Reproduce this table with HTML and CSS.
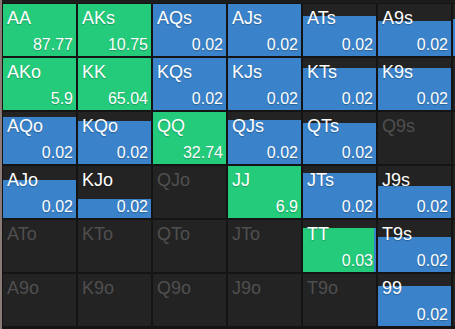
FILE: index.html
```html
<!DOCTYPE html>
<html lang="en">
<head>
<meta charset="utf-8">
<title>Range grid</title>
<link rel="stylesheet" href="styles.css">
</head>
<body>
<div class="frame">
  <div class="edge"></div>
  <div class="main">
    <div class="topbar"></div>
    <div class="board">
      <!-- row A -->
      <div class="cell"><div class="bar" style="height:100%"><span class="seg g"></span></div><div class="content"><span class="lbl">AA</span><span class="val">87.77</span></div></div>
      <div class="cell"><div class="bar" style="height:100%"><span class="seg g"></span></div><div class="content"><span class="lbl">AKs</span><span class="val">10.75</span></div></div>
      <div class="cell"><div class="bar" style="height:100%"><span class="seg b"></span></div><div class="content"><span class="lbl">AQs</span><span class="val">0.02</span></div></div>
      <div class="cell"><div class="bar" style="height:100%"><span class="seg b"></span></div><div class="content"><span class="lbl">AJs</span><span class="val">0.02</span></div></div>
      <div class="cell"><div class="bar" style="height:77%"><span class="seg b"></span></div><div class="content"><span class="lbl">ATs</span><span class="val">0.02</span></div></div>
      <div class="cell"><div class="bar" style="height:67%"><span class="seg b"></span></div><div class="content"><span class="lbl">A9s</span><span class="val">0.02</span></div></div>
      <div class="cell"><div class="bar" style="height:71%"><span class="seg b"></span></div></div>
      <!-- row K -->
      <div class="cell"><div class="bar" style="height:100%"><span class="seg g"></span></div><div class="content"><span class="lbl">AKo</span><span class="val">5.9</span></div></div>
      <div class="cell"><div class="bar" style="height:100%"><span class="seg g"></span></div><div class="content"><span class="lbl">KK</span><span class="val">65.04</span></div></div>
      <div class="cell"><div class="bar" style="height:100%"><span class="seg b"></span></div><div class="content"><span class="lbl">KQs</span><span class="val">0.02</span></div></div>
      <div class="cell"><div class="bar" style="height:100%"><span class="seg b"></span></div><div class="content"><span class="lbl">KJs</span><span class="val">0.02</span></div></div>
      <div class="cell"><div class="bar" style="height:81%"><span class="seg b"></span></div><div class="content"><span class="lbl">KTs</span><span class="val">0.02</span></div></div>
      <div class="cell"><div class="bar" style="height:81%"><span class="seg b"></span></div><div class="content"><span class="lbl">K9s</span><span class="val">0.02</span></div></div>
      <div class="cell empty"></div>
      <!-- row Q -->
      <div class="cell"><div class="bar" style="height:91%"><span class="seg b"></span></div><div class="content"><span class="lbl">AQo</span><span class="val">0.02</span></div></div>
      <div class="cell"><div class="bar" style="height:83%"><span class="seg b"></span></div><div class="content"><span class="lbl">KQo</span><span class="val">0.02</span></div></div>
      <div class="cell"><div class="bar" style="height:100%"><span class="seg g"></span></div><div class="content"><span class="lbl">QQ</span><span class="val">32.74</span></div></div>
      <div class="cell"><div class="bar" style="height:85%"><span class="seg b"></span></div><div class="content"><span class="lbl">QJs</span><span class="val">0.02</span></div></div>
      <div class="cell"><div class="bar" style="height:79%"><span class="seg b"></span></div><div class="content"><span class="lbl">QTs</span><span class="val">0.02</span></div></div>
      <div class="cell empty"><div class="content"><span class="lbl">Q9s</span></div></div>
      <div class="cell empty"></div>
      <!-- row J -->
      <div class="cell"><div class="bar" style="height:74%"><span class="seg b"></span></div><div class="content"><span class="lbl">AJo</span><span class="val">0.02</span></div></div>
      <div class="cell"><div class="bar" style="height:36%"><span class="seg b"></span></div><div class="content"><span class="lbl">KJo</span><span class="val">0.02</span></div></div>
      <div class="cell empty"><div class="content"><span class="lbl">QJo</span></div></div>
      <div class="cell"><div class="bar" style="height:100%"><span class="seg g"></span></div><div class="content"><span class="lbl">JJ</span><span class="val">6.9</span></div></div>
      <div class="cell"><div class="bar" style="height:87%"><span class="seg b"></span></div><div class="content"><span class="lbl">JTs</span><span class="val">0.02</span></div></div>
      <div class="cell"><div class="bar" style="height:62%"><span class="seg b"></span></div><div class="content"><span class="lbl">J9s</span><span class="val">0.02</span></div></div>
      <div class="cell empty"></div>
      <!-- row T -->
      <div class="cell empty"><div class="content"><span class="lbl">ATo</span></div></div>
      <div class="cell empty"><div class="content"><span class="lbl">KTo</span></div></div>
      <div class="cell empty"><div class="content"><span class="lbl">QTo</span></div></div>
      <div class="cell empty"><div class="content"><span class="lbl">JTo</span></div></div>
      <div class="cell"><div class="bar" style="height:85%"><span class="seg g" style="flex-grow:97"></span><span class="seg b" style="flex-grow:3"></span></div><div class="content"><span class="lbl">TT</span><span class="val">0.03</span></div></div>
      <div class="cell"><div class="bar" style="height:68%"><span class="seg b"></span></div><div class="content"><span class="lbl">T9s</span><span class="val">0.02</span></div></div>
      <div class="cell empty"></div>
      <!-- row 9 -->
      <div class="cell empty"><div class="content"><span class="lbl">A9o</span></div></div>
      <div class="cell empty"><div class="content"><span class="lbl">K9o</span></div></div>
      <div class="cell empty"><div class="content"><span class="lbl">Q9o</span></div></div>
      <div class="cell empty"><div class="content"><span class="lbl">J9o</span></div></div>
      <div class="cell empty"><div class="content"><span class="lbl">T9o</span></div></div>
      <div class="cell"><div class="bar" style="height:76%"><span class="seg b"></span></div><div class="content"><span class="lbl">99</span><span class="val">0.02</span></div></div>
      <div class="cell empty"></div>
    </div>
  </div>
</div>
</body>
</html>
```
FILE: styles.css
```css
html, body {
  margin: 0;
  padding: 0;
  background: #161616;
  overflow: hidden;
}
body {
  width: 455px;
  height: 329px;
  font-family: "Liberation Sans", Arial, Helvetica, sans-serif;
}
.frame {
  display: flex;
  height: 329px;
  overflow: hidden;
}
.edge {
  flex: 0 0 2px;
  background: #8a7b76;
}
.main {
  flex: 1 1 auto;
  min-width: 0;
  overflow: hidden;
}
.topbar {
  height: 3px;
  background: #1c1c1c;
}
.board {
  display: grid;
  grid-template-columns: repeat(6, 73px) 2px;
  grid-auto-rows: 52px;
  gap: 2px;
  padding: 1px 0 2px 1px;
  background: #141414;
  width: max-content;
}
.cell {
  display: grid;
  background: #232323;
  overflow: hidden;
}
.bar {
  grid-area: 1 / 1;
  align-self: end;
  display: flex;
}
.seg {
  flex: 1 1 0;
}
.seg.g { background: #24cb7b; }
.seg.b { background: #3a82c9; }
.content {
  grid-area: 1 / 1;
  display: flex;
  flex-direction: column;
  justify-content: space-between;
  padding: 5px 3px 3px 4px;
  color: #ffffff;
  text-shadow: 0 1px 1px rgba(0, 0, 0, 0.25);
}
.lbl {
  font-size: 18px;
  line-height: 18px;
}
.val {
  align-self: flex-end;
  font-size: 16px;
  line-height: 16px;
}
.empty .content {
  color: #4f4f4f;
  text-shadow: none;
}
```
